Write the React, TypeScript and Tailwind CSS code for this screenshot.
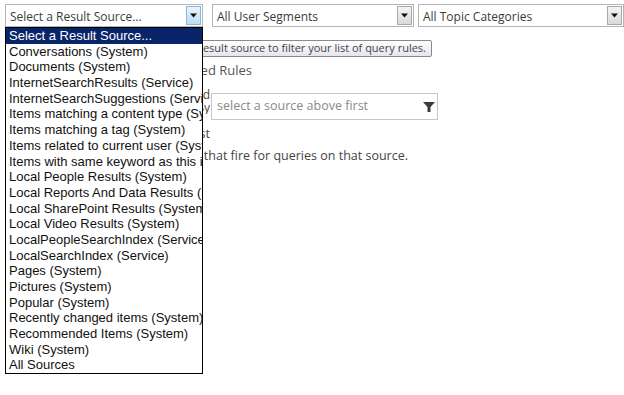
import React from "react"

const sources = [
  "Select a Result Source...",
  "Conversations (System)",
  "Documents (System)",
  "InternetSearchResults (Service)",
  "InternetSearchSuggestions (Service)",
  "Items matching a content type (System)",
  "Items matching a tag (System)",
  "Items related to current user (System)",
  "Items with same keyword as this item (System)",
  "Local People Results (System)",
  "Local Reports And Data Results (System)",
  "Local SharePoint Results (System)",
  "Local Video Results (System)",
  "LocalPeopleSearchIndex (Service)",
  "LocalSearchIndex (Service)",
  "Pages (System)",
  "Pictures (System)",
  "Popular (System)",
  "Recently changed items (System)",
  "Recommended Items (System)",
  "Wiki (System)",
  "All Sources",
]

function Arrow({ hot }: { hot?: boolean }) {
  return (
    <div
      className={
        hot
          ? "w-[15px] h-[19px] border border-[#8fb4d6] bg-gradient-to-b from-[#e8f3fc] to-[#bcdcf4] flex items-center justify-center"
          : "w-[15px] h-[19px] border border-[#a8a8a8] bg-gradient-to-b from-[#f4f4f4] to-[#d9d9d9] flex items-center justify-center"
      }
    >
      <svg width="7" height="5" viewBox="0 0 7 5">
        <path d="M0 0.5 H7 L3.5 4.5 Z" fill="#111" />
      </svg>
    </div>
  )
}

function Select({ label, width, hot }: { label: string; width: string; hot?: boolean }) {
  return (
    <div className={`${width} h-[23px] border border-[#b5b5b5] bg-white flex items-center justify-between pl-[4px] pr-[1px]`}>
      <span className="text-[12px] pt-[2px] text-[#3b3b3b] whitespace-nowrap">{label}</span>
      <Arrow hot={hot} />
    </div>
  )
}

export default function App() {
  return (
    <div className="relative w-[624px] h-[395px] bg-white overflow-hidden font-['Open_Sans',sans-serif] text-[#444]">
      {/* context pickers */}
      <div className="flex pt-[4px] pl-[5px]">
        <Select label="Select a Result Source..." width="w-[198px]" hot />
        <div className="ml-[9px]">
          <Select label="All User Segments" width="w-[202px]" />
        </div>
        <div className="ml-[4px]">
          <Select label="All Topic Categories" width="w-[206px]" />
        </div>
      </div>

      {/* page body (mostly behind the open list) */}
      <div className="pt-[34px] pl-[3px]">
        <div className="w-[249px] text-right text-[13px] text-[#555] whitespace-nowrap leading-[18px]">
          Show Defined Rules
        </div>
        <div className="flex items-start mt-[14px]">
          <div className="-mt-[5px] w-[207px] overflow-hidden whitespace-nowrap text-[12px] leading-[13px]">
            <div className="text-right">Rules for LocalSearchId</div>
            <div className="text-right">(Service), Sy</div>
          </div>
          <div className="ml-[1px] w-[227px] h-[27px] border border-[#c8c8c8] flex items-center justify-between pl-[5px] pr-[2px]">
            <span className="text-[12.5px] text-[#8a8a8a]">select a source above first</span>
            <svg width="12" height="10" viewBox="0 0 12 10">
              <path d="M0 0 H12 L7.5 5 V10 H4.5 V5 Z" fill="#3a3a3a" />
            </svg>
          </div>
        </div>
        <div className="mt-[6px] w-[207px] text-right whitespace-nowrap text-[12.5px] leading-[15px]">
          Pick a source first
        </div>
        <div className="mt-[7px] w-[405px] text-right whitespace-nowrap text-[12.5px] leading-[15px]">
          and then look at the rules that fire for queries on that source.
        </div>
      </div>

      {/* tooltip */}
      <div className="absolute top-[40px] right-[192px] h-[17px] px-[5px] border border-[#8a8a8a] rounded-[2px] bg-gradient-to-b from-white to-[#e4e5f0] flex items-center">
        <span className="text-[11px] text-[#444] whitespace-nowrap">
          Select a result source to filter your list of query rules.
        </span>
      </div>

      {/* open dropdown list */}
      <div className="absolute left-[5px] top-[27px] w-[198px] border border-black bg-white font-['Liberation_Sans',Arial,sans-serif]">
        {sources.map((s, i) => (
          <div
            key={s}
            className={
              i === 0
                ? "h-[15.7px] leading-[15.7px] pl-[3px] text-[13px] whitespace-nowrap overflow-hidden bg-[#0a246a] text-white"
                : "h-[15.7px] leading-[15.7px] pl-[3px] text-[13px] whitespace-nowrap overflow-hidden text-[#111]"
            }
          >
            {s}
          </div>
        ))}
      </div>
    </div>
  )
}
